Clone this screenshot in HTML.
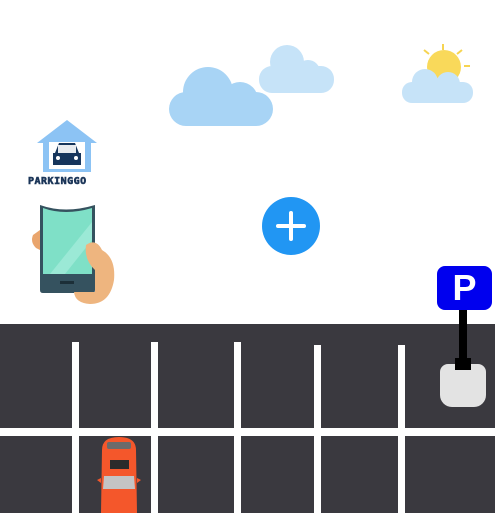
<!DOCTYPE html>
<html><head><style>
html,body{margin:0;width:495px;height:513px;background:#fff;position:relative;overflow:hidden;font-family:"Liberation Sans",sans-serif}
.a{position:absolute}
.v{position:absolute;background:#fff;width:7px;top:342px;height:171px}
</style></head><body>
<svg class="a" style="left:0;top:0" width="495" height="140">
<g fill="#a8d4f5"><circle cx="208" cy="92" r="25"/><circle cx="240" cy="100" r="18"/><rect x="169" y="92" width="104" height="34" rx="17"/><circle cx="190" cy="105" r="14"/></g>
<g fill="#c6e3f8"><circle cx="287" cy="62" r="17"/><circle cx="308" cy="72" r="12"/><rect x="259" y="66" width="75" height="27" rx="13"/></g>
<g stroke="#f6d451" stroke-width="2"><line x1="443" y1="44" x2="443" y2="50"/><line x1="424" y1="50" x2="429" y2="54"/><line x1="462" y1="50" x2="457" y2="54"/><line x1="470" y1="66" x2="464" y2="66"/></g>
<circle cx="444" cy="67" r="17" fill="#f9d95a"/>
<g fill="#c6e3f8"><circle cx="425" cy="82" r="13"/><circle cx="448" cy="84" r="12"/><rect x="402" y="82" width="71" height="21" rx="10"/></g>
</svg>
<svg class="a" style="top:117px;left:35px" width="64" height="58">
<path d="M32 3 L62 26 L56 26 L56 55 L8 55 L8 26 L2 26 Z" fill="#8cc3f4"/>
<rect x="14" y="25" width="36" height="27" fill="#fff"/>
<path d="M20 36 L24 26 L40 26 L44 36 L46 36 L46 48 L18 48 L18 36 Z" fill="#16355c"/>
<rect x="23" y="28" width="18" height="8" fill="#fff" opacity=".9"/>
<circle cx="23" cy="41" r="2" fill="#fff"/><circle cx="41" cy="41" r="2" fill="#fff"/>
</svg>
<div class="a" style="left:28px;top:176px;font-size:10px;font-weight:bold;color:#1b3558;letter-spacing:0.5px;font-family:'DejaVu Sans Mono',monospace;-webkit-text-stroke:0.6px #1b3558">PARKINGGO</div>
<svg class="a" style="left:30px;top:200px" width="90" height="108">
<path d="M10 5 Q35 14 65 5 L65 90 Q65 93 62 93 L13 93 Q10 93 10 90 Z" fill="#35525f"/>
<path d="M13 8 Q35 16 62 8 L62 74 L13 74 Z" fill="#7fe0c7"/>
<path d="M20 74 L62 22 L62 40 L35 74Z" fill="#9be9d6"/>
<rect x="30" y="81" width="14" height="3" fill="#1c2f38"/>
<path d="M10 30 L3 35 Q0 42 6 48 L10 50Z" fill="#e9a56d"/>
<path d="M56 45 Q66 38 72 50 Q86 58 84 80 Q80 104 60 104 Q45 103 44 92 L65 92 L65 70 Q54 60 56 45Z" fill="#eeb57f"/>
</svg>
<div class="a" style="left:262px;top:197px;width:58px;height:58px;border-radius:50%;background:#2196f3"></div>
<div class="a" style="left:276px;top:224px;width:30px;height:4px;background:#fff;border-radius:2px"></div>
<div class="a" style="left:289px;top:211px;width:4px;height:30px;background:#fff;border-radius:2px"></div>
<div class="a" style="left:0;top:324px;width:495px;height:189px;background:#3a393f"></div>
<div class="a" style="left:0;top:428px;width:495px;height:8px;background:#fff"></div>
<div class="v" style="left:72px"></div>
<div class="v" style="left:151px"></div>
<div class="v" style="left:234px"></div>
<div class="v" style="left:314px;top:345px"></div>
<div class="v" style="left:398px;top:345px"></div>
<div class="a" style="left:437px;top:266px;width:55px;height:44px;background:#0000ee;border-radius:8px;color:#fff;font-weight:bold;font-size:36px;text-align:center;line-height:44px">P</div>
<div class="a" style="left:459px;top:310px;width:8px;height:55px;background:#000"></div>
<div class="a" style="left:440px;top:364px;width:46px;height:43px;background:#e3e3e3;border-radius:8px 8px 12px 12px"></div>
<div class="a" style="left:455px;top:358px;width:16px;height:12px;background:#000"></div>
<svg class="a" style="left:93px;top:436px" width="52" height="77">
<path d="M9 14 Q9 1 26 1 Q43 1 43 14 L44 77 L8 77 Z" fill="#f4572b"/>
<rect x="14" y="6" width="24" height="7" rx="2" fill="#6b6b6b"/>
<rect x="17" y="24" width="19" height="9" fill="#2b2b2b"/>
<path d="M11 40 L41 40 L42 53 L10 53Z" fill="#c4c4c4"/>
<path d="M4 44 L8 42 L8 47Z M48 44 L44 42 L44 47Z" fill="#f4572b"/>
</svg>
</body></html>
